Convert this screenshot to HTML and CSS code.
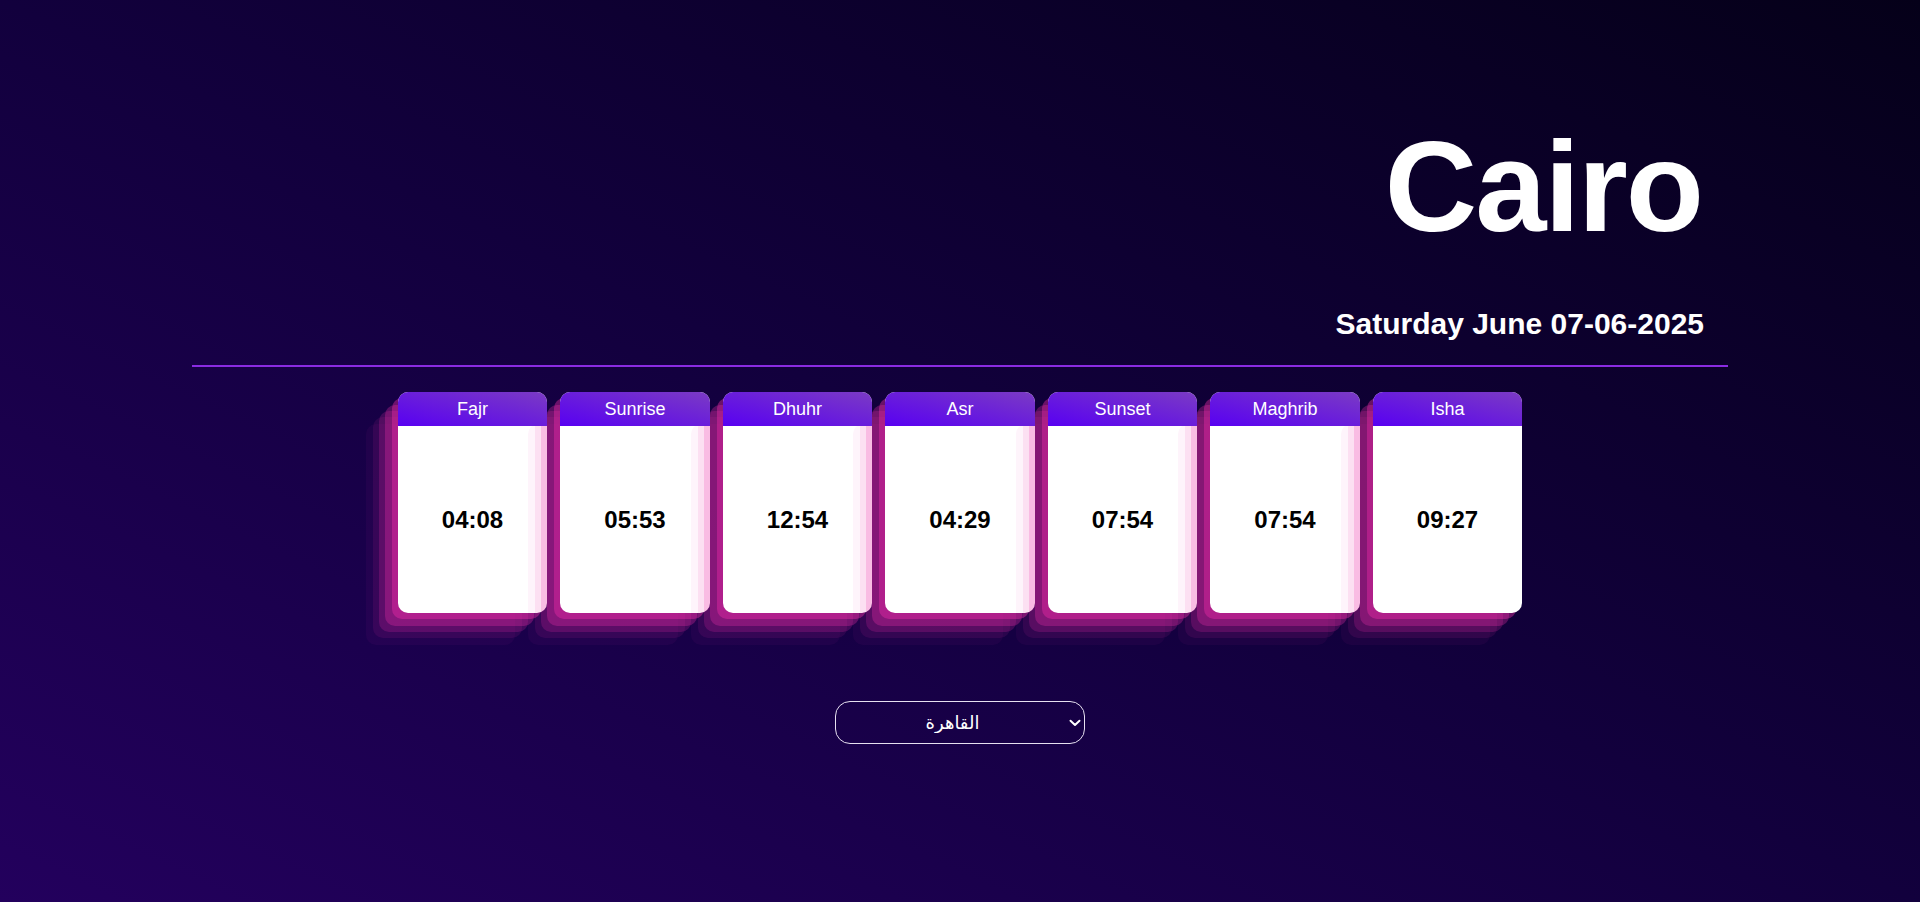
FILE: index.html
```html
<!DOCTYPE html>
<html lang="en">
<head>
<meta charset="utf-8">
<title>Prayer Times - Cairo</title>
<link rel="stylesheet" href="styles.css">
</head>
<body>
<main class="page">
  <header class="head">
    <h1 class="city">Cairo</h1>
    <h2 class="date">Saturday June 07-06-2025</h2>
  </header>
  <section class="cards">
    <div class="card"><div class="card-title">Fajr</div><div class="card-time">04:08</div></div>
    <div class="card"><div class="card-title">Sunrise</div><div class="card-time">05:53</div></div>
    <div class="card"><div class="card-title">Dhuhr</div><div class="card-time">12:54</div></div>
    <div class="card"><div class="card-title">Asr</div><div class="card-time">04:29</div></div>
    <div class="card"><div class="card-title">Sunset</div><div class="card-time">07:54</div></div>
    <div class="card"><div class="card-title">Maghrib</div><div class="card-time">07:54</div></div>
    <div class="card"><div class="card-title">Isha</div><div class="card-time">09:27</div></div>
  </section>
  <div class="picker">
    <div class="select-wrap">
      <select class="city-select">
        <option>القاهرة</option>
        <option>الإسكندرية</option>
        <option>الجيزة</option>
      </select>
      <svg class="chevron" width="12" height="8" viewBox="0 0 12 8" aria-hidden="true">
        <path d="M1.5 1.8 L6 6 L10.5 1.8" fill="none" stroke="#ffffff" stroke-width="2" stroke-linecap="round" stroke-linejoin="round"/>
      </svg>
    </div>
  </div>
</main>
</body>
</html>
```
FILE: styles.css
```css
* { box-sizing: border-box; }
html, body { margin: 0; padding: 0; }
body {
  font-family: "Liberation Sans", Arial, "DejaVu Sans", sans-serif;
  color: #fff;
}
.page {
  min-height: 100vh;
  background: linear-gradient(to top right, #23005d 0%, #12003d 50%, #050019 100%);
  padding-top: 123px;
  padding-bottom: 40px;
}
.head {
  width: 80%;
  margin: 0 auto;
  text-align: right;
  padding-right: 24px;
  padding-bottom: 26px;
  border-bottom: 2px solid #8a2be2;
}
.city {
  margin: 0;
  padding-right: 2px;
  font-size: 128px;
  line-height: 128px;
  font-weight: 700;
  letter-spacing: -2px;
}
.date {
  margin: 58px 0 0;
  font-size: 30px;
  line-height: 30px;
  font-weight: 700;
}
.cards {
  display: flex;
  justify-content: center;
  gap: 13px;
  margin-top: 25px;
}
.card {
  width: 149.5px;
  height: 221px;
  background: #fff;
  border-radius: 10px;
  display: flex;
  flex-direction: column;
  box-shadow:
    rgba(240, 46, 170, 0.4) -6px 6px,
    rgba(240, 46, 170, 0.3) -13px 13px,
    rgba(240, 46, 170, 0.2) -19px 19px,
    rgba(240, 46, 170, 0.1) -25px 25px,
    rgba(240, 46, 170, 0.05) -32px 32px;
}
.card-title {
  position: relative;
  height: 34px;
  line-height: 34px;
  text-align: center;
  font-size: 18px;
  color: #fff;
  border-radius: 10px 10px 0 0;
  background: linear-gradient(to top right, #5800f2, #7b3bc4);
}
.card-time {
  flex: 1;
  display: flex;
  align-items: center;
  justify-content: center;
  color: #000;
  font-size: 24px;
  font-weight: 700;
}
.picker {
  display: flex;
  justify-content: center;
  margin-top: 88px;
}
.select-wrap {
  position: relative;
  width: 250px;
  height: 43px;
}
.city-select {
  appearance: none;
  -webkit-appearance: none;
  width: 100%;
  height: 100%;
  border: 1px solid #e6e0f0;
  border-radius: 15px;
  background: transparent;
  color: #fff;
  font-family: "Liberation Sans", "DejaVu Sans", sans-serif;
  font-size: 18px;
  text-align: center;
  text-align-last: center;
  padding: 0 22px 0 7px;
  outline: none;
}
.city-select option {
  color: #000;
  background: #fff;
}
.chevron {
  position: absolute;
  right: 4px;
  top: 18px;
  pointer-events: none;
}
```
